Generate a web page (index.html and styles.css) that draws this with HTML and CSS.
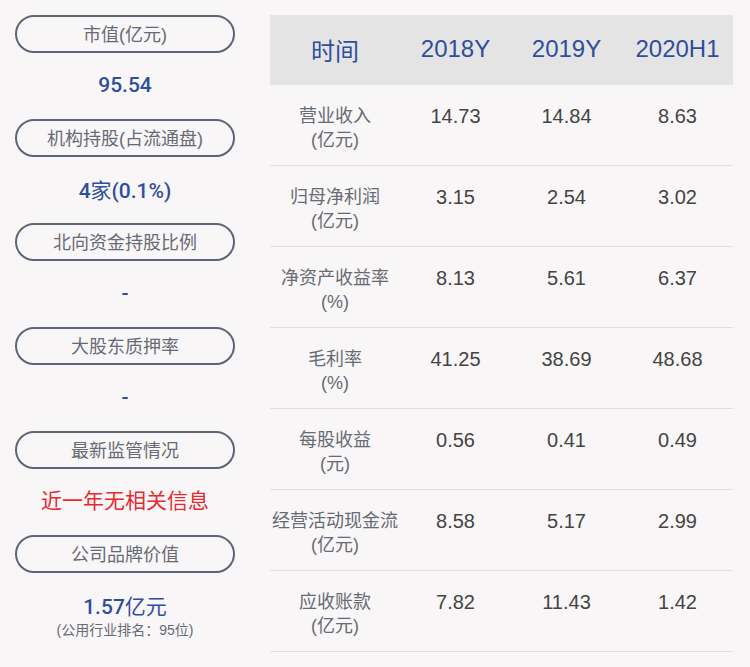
FILE: index.html
```html
<!DOCTYPE html>
<html lang="zh">
<head>
<meta charset="utf-8">
<link rel="stylesheet" href="styles.css">
</head>
<body>
<div class="page">
  <div class="side">
    <div class="pill">市值(亿元)</div>
    <div class="val">95.54</div>
    <div class="pill">机构持股(占流通盘)</div>
    <div class="val">4<span class="cjk">家</span>(0.1%)</div>
    <div class="pill">北向资金持股比例</div>
    <div class="val">-</div>
    <div class="pill">大股东质押率</div>
    <div class="val">-</div>
    <div class="pill">最新监管情况</div>
    <div class="val red"><span class="cjk">近一年无相关信息</span></div>
    <div class="pill">公司品牌价值</div>
    <div class="val">1.57<span class="cjk">亿元</span><div class="sub">(公用行业排名：95位)</div></div>
  </div>
  <div class="table">
    <div class="head">
      <div>时间</div><div>2018Y</div><div>2019Y</div><div>2020H1</div>
    </div>
    <div class="row"><div class="lbl">营业收入<br>(亿元)</div><div>14.73</div><div>14.84</div><div>8.63</div></div>
    <div class="row"><div class="lbl">归母净利润<br>(亿元)</div><div>3.15</div><div>2.54</div><div>3.02</div></div>
    <div class="row"><div class="lbl">净资产收益率<br>(%)</div><div>8.13</div><div>5.61</div><div>6.37</div></div>
    <div class="row"><div class="lbl">毛利率<br>(%)</div><div>41.25</div><div>38.69</div><div>48.68</div></div>
    <div class="row"><div class="lbl">每股收益<br>(元)</div><div>0.56</div><div>0.41</div><div>0.49</div></div>
    <div class="row"><div class="lbl">经营活动现金流<br>(亿元)</div><div>8.58</div><div>5.17</div><div>2.99</div></div>
    <div class="row"><div class="lbl">应收账款<br>(亿元)</div><div>7.82</div><div>11.43</div><div>1.42</div></div>
  </div>
</div>
</body>
</html>
```

FILE: styles.css
```css
html, body {
  margin: 0;
  padding: 0;
  background: #f9f6f7;
  font-family: "Liberation Sans", "Noto Sans CJK SC", sans-serif;
}
.page {
  display: flex;
  gap: 35px;
  padding: 15px;
}
.side {
  width: 220px;
  display: flex;
  flex-direction: column;
}
.pill {
  box-sizing: border-box;
  height: 38px;
  border: 2px solid #5d6675;
  border-radius: 19px;
  display: flex;
  align-items: center;
  justify-content: center;
  padding-bottom: 2px;
  font-size: 18px;
  color: #666b74;
}
.val {
  height: 66px;
  box-sizing: border-box;
  padding-top: 20px;
  text-align: center;
  font-family: "Roboto", "Noto Sans CJK SC", sans-serif;
  font-weight: 500;
  font-size: 21px;
  line-height: 24px;
  color: #2f4e9b;
}
.val .cjk {
  font-family: "Noto Sans CJK SC", sans-serif;
  font-weight: 400;
}
.val.red {
  color: #e52a2e;
  padding-top: 18px;
}
.sub {
  font-family: "Liberation Sans", "Noto Sans CJK SC", sans-serif;
  font-weight: 400;
  font-size: 14px;
  line-height: 22px;
  color: #666b74;
}
.table {
  width: 463px;
}
.head, .row {
  display: grid;
  grid-template-columns: 130px 111px 111px 111px;
}
.head {
  height: 70px;
  background: #e5e4e5;
  align-items: center;
  text-align: center;
  font-size: 24px;
  color: #2f4e9b;
  padding-bottom: 2px;
  box-sizing: border-box;
}
.row {
  height: 81px;
  box-sizing: border-box;
  border-bottom: 1px solid #e2dfe0;
  padding-top: 19px;
  text-align: center;
  font-size: 20px;
  line-height: 24px;
  color: #444;
}
.row .lbl {
  font-size: 18px;
  color: #666b74;
}
```
